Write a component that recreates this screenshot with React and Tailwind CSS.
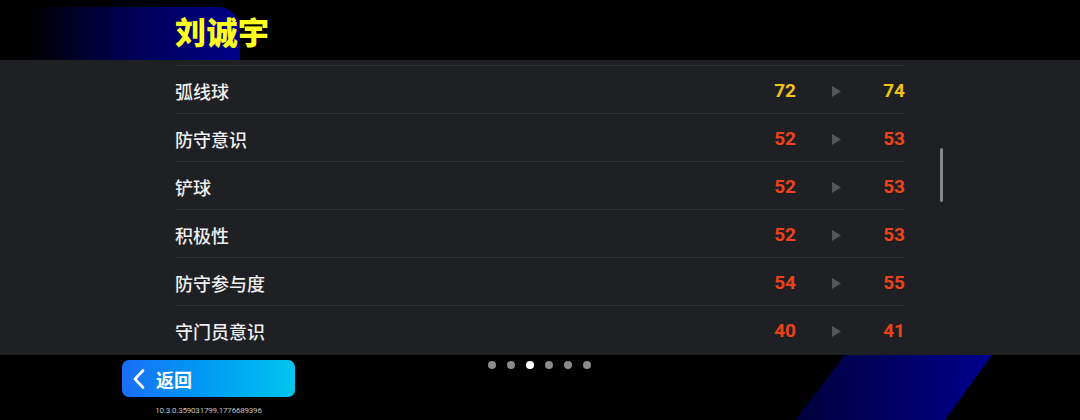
import React from "react";

const ROWS = [
  { name: "弧线球", from: 72, to: 74, tone: "text-[#f2c21b]" },
  { name: "防守意识", from: 52, to: 53, tone: "text-[#ee4318]" },
  { name: "铲球", from: 52, to: 53, tone: "text-[#ee4318]" },
  { name: "积极性", from: 52, to: 53, tone: "text-[#ee4318]" },
  { name: "防守参与度", from: 54, to: 55, tone: "text-[#ee4318]" },
  { name: "守门员意识", from: 40, to: 41, tone: "text-[#ee4318]" },
];

function Arrow() {
  return (
    <svg width="9" height="11" viewBox="0 0 9 11">
      <path d="M0 0 L9 5.5 L0 11 Z" fill="#55565b" />
    </svg>
  );
}

export default function App() {
  return (
    <div className="relative w-[1080px] h-[420px] overflow-hidden bg-black font-['Noto_Sans_CJK_SC',sans-serif]">
      {/* header */}
      <div className="relative h-[60px]">
        <div className="absolute left-0 top-[7px] w-[240px] h-[53px] rounded-tr-[22px] bg-gradient-to-r from-black via-[#000050] to-[#00008a]" />
        <div className="relative pl-[175px] pt-[11px] text-[31px] leading-[40px] font-black text-[#ffff1e] tracking-[0.5px]">
          刘诚宇
        </div>
      </div>

      {/* stats panel */}
      <div className="relative h-[295px] bg-[#1f2024] pt-[5px]">
        <div className="ml-[175px] w-[730px]">
          {ROWS.map((r) => (
            <div key={r.name} className="flex items-center h-[48px] pt-[3px] border-t border-[#2f3034]">
              <span className="flex-1 text-[18px] font-medium text-[#efefef]">{r.name}</span>
              <span className={`w-[60px] text-right text-[19px] font-bold font-['Roboto',sans-serif] ${r.tone}`}>{r.from}</span>
              <span className="w-[80px] flex justify-center"><Arrow /></span>
              <span className={`w-[29px] text-right text-[19px] font-bold font-['Roboto',sans-serif] ${r.tone}`}>{r.to}</span>
            </div>
          ))}
        </div>
        <div className="absolute left-[940px] top-[88px] w-[3px] h-[54px] rounded-full bg-[#85868b]" />
      </div>

      {/* footer */}
      <div className="relative h-[65px]">
        <svg className="absolute left-0 top-0" width="1080" height="65" viewBox="0 0 1080 65">
          <defs>
            <linearGradient id="stripe" x1="0" y1="0" x2="1" y2="0">
              <stop offset="0" stopColor="#00003c" />
              <stop offset="1" stopColor="#00008e" />
            </linearGradient>
          </defs>
          <polygon points="845,0 992,0 945,65 795,65" fill="url(#stripe)" />
        </svg>
        <div className="relative flex">
          <div className="ml-[122px] w-[173px] flex flex-col items-center">
            <button className="mt-[5px] w-[173px] h-[37px] rounded-[7px] bg-gradient-to-r from-[#1a6ef6] to-[#02c6ee] flex items-center pl-[10px] gap-[10px] text-white">
              <svg width="14" height="20" viewBox="0 0 14 20">
                <path d="M11 1.5 L3 10 L11 18.5" fill="none" stroke="#fff" strokeWidth="2.6" strokeLinecap="round" strokeLinejoin="round" />
              </svg>
              <span className="text-[18px] font-bold leading-none">返回</span>
            </button>
            <div className="mt-[10px] text-[8px] leading-none text-[#c0c0c0] font-['Roboto',sans-serif] tracking-[-0.2px]">
              10.3.0.359031799.1776689396
            </div>
          </div>
          <div className="ml-[193px] mt-[6px] flex gap-[11px] h-[8px]">
            {[0, 1, 2, 3, 4, 5].map((i) => (
              <span key={i} className={`w-[8px] h-[8px] rounded-full ${i === 2 ? "bg-white" : "bg-[#8a8a8a]"}`} />
            ))}
          </div>
        </div>
      </div>
    </div>
  );
}
